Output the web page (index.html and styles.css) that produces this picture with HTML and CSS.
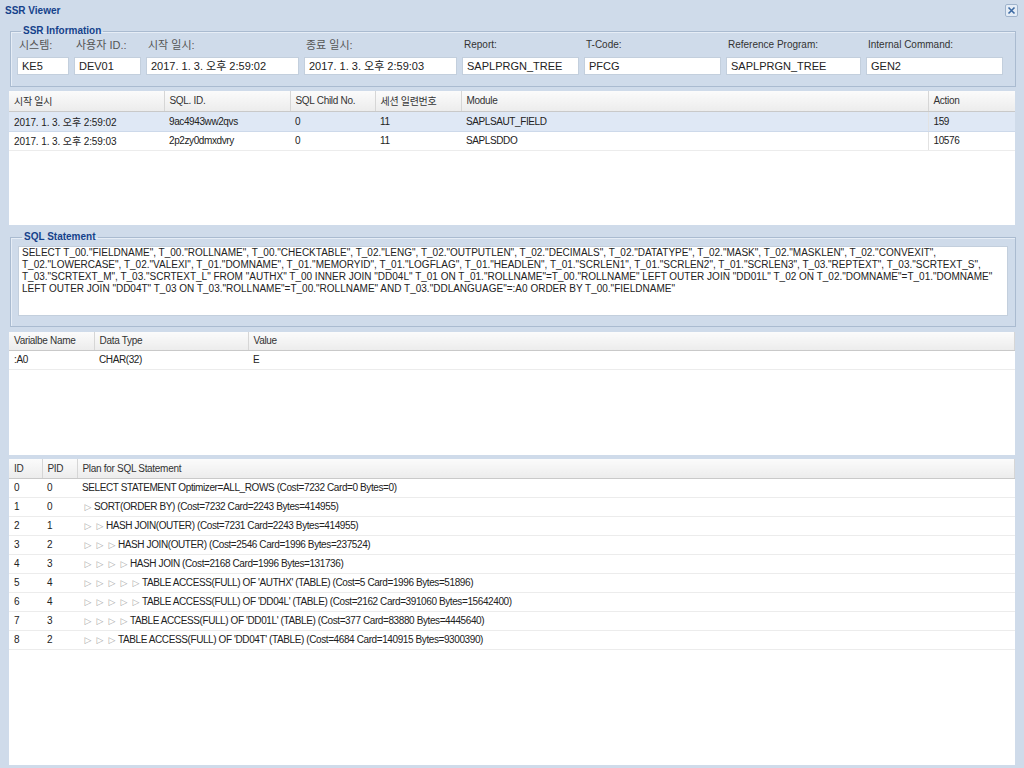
FILE: index.html
```html
<!DOCTYPE html>
<html lang="ko">
<head>
<meta charset="utf-8">
<title>SSR Viewer</title>
<link rel="stylesheet" href="styles.css">
</head>
<body>
<div class="titlebar">
  <span class="title">SSR Viewer</span>
  <span class="close"><svg width="13" height="13" viewBox="0 0 13 13"><rect x="0.5" y="0.5" width="12" height="12" rx="1.5" fill="#e4ecf6" stroke="#9fb3cc"/><path d="M3.5 3.5 L9.5 9.5 M9.5 3.5 L3.5 9.5" stroke="#3d6aa3" stroke-width="1.6"/></svg></span>
</div>

<fieldset class="group info">
  <legend>SSR Information</legend>
  <div class="fields">
    <div class="field"><label class="ko">시스템:</label><div class="input">KE5</div></div>
    <div class="field"><label class="ko">사용자 ID.:</label><div class="input">DEV01</div></div>
    <div class="field"><label class="ko">시작 일시:</label><div class="input">2017. 1. 3. 오후 2:59:02</div></div>
    <div class="field"><label class="ko">종료 일시:</label><div class="input">2017. 1. 3. 오후 2:59:03</div></div>
    <div class="field"><label>Report:</label><div class="input">SAPLPRGN_TREE</div></div>
    <div class="field"><label>T-Code:</label><div class="input">PFCG</div></div>
    <div class="field"><label>Reference Program:</label><div class="input">SAPLPRGN_TREE</div></div>
    <div class="field"><label>Internal Command:</label><div class="input">GEN2</div></div>
  </div>
</fieldset>

<div class="grid grid1">
  <table>
    <colgroup><col style="width:155px"><col style="width:126px"><col style="width:85px"><col style="width:86px"><col style="width:467px"><col style="width:87px"></colgroup>
    <thead><tr><th>시작 일시</th><th>SQL. ID.</th><th>SQL Child No.</th><th>세션 일련번호</th><th>Module</th><th>Action</th></tr></thead>
    <tbody>
      <tr class="sel"><td class="dt">2017. 1. 3. 오후 2:59:02</td><td>9ac4943ww2qvs</td><td>0</td><td>11</td><td>SAPLSAUT_FIELD</td><td class="lastcol">159</td></tr>
      <tr><td class="dt">2017. 1. 3. 오후 2:59:03</td><td>2p2zy0dmxdvry</td><td>0</td><td>11</td><td>SAPLSDDO</td><td class="lastcol">10576</td></tr>
    </tbody>
  </table>
</div>

<fieldset class="group sqlgroup">
  <legend>SQL Statement</legend>
  <div class="sqltext">SELECT T_00."FIELDNAME", T_00."ROLLNAME", T_00."CHECKTABLE", T_02."LENG", T_02."OUTPUTLEN", T_02."DECIMALS", T_02."DATATYPE", T_02."MASK", T_02."MASKLEN", T_02."CONVEXIT",<br>T_02."LOWERCASE", T_02."VALEXI", T_01."DOMNAME", T_01."MEMORYID", T_01."LOGFLAG", T_01."HEADLEN", T_01."SCRLEN1", T_01."SCRLEN2", T_01."SCRLEN3", T_03."REPTEXT", T_03."SCRTEXT_S",<br>T_03."SCRTEXT_M", T_03."SCRTEXT_L" FROM "AUTHX" T_00 INNER JOIN "DD04L" T_01 ON T_01."ROLLNAME"=T_00."ROLLNAME" LEFT OUTER JOIN "DD01L" T_02 ON T_02."DOMNAME"=T_01."DOMNAME"<br>LEFT OUTER JOIN "DD04T" T_03 ON T_03."ROLLNAME"=T_00."ROLLNAME" AND T_03."DDLANGUAGE"=:A0 ORDER BY T_00."FIELDNAME"</div>
</fieldset>

<div class="grid grid2">
  <table>
    <colgroup><col style="width:85px"><col style="width:154px"><col></colgroup>
    <thead><tr><th>Varialbe Name</th><th>Data Type</th><th>Value</th></tr></thead>
    <tbody>
      <tr><td>:A0</td><td>CHAR(32)</td><td>E</td></tr>
    </tbody>
  </table>
</div>

<div class="grid grid3">
  <table>
    <colgroup><col style="width:33px"><col style="width:35px"><col></colgroup>
    <thead><tr><th>ID</th><th>PID</th><th>Plan for SQL Statement</th></tr></thead>
    <tbody>
      <tr><td>0</td><td>0</td><td>SELECT STATEMENT Optimizer=ALL_ROWS (Cost=7232 Card=0 Bytes=0)</td></tr>
      <tr><td>1</td><td>0</td><td><span class="tri">▷</span>SORT(ORDER BY) (Cost=7232 Card=2243 Bytes=414955)</td></tr>
      <tr><td>2</td><td>1</td><td><span class="tri">▷</span><span class="tri">▷</span>HASH JOIN(OUTER) (Cost=7231 Card=2243 Bytes=414955)</td></tr>
      <tr><td>3</td><td>2</td><td><span class="tri">▷</span><span class="tri">▷</span><span class="tri">▷</span>HASH JOIN(OUTER) (Cost=2546 Card=1996 Bytes=237524)</td></tr>
      <tr><td>4</td><td>3</td><td><span class="tri">▷</span><span class="tri">▷</span><span class="tri">▷</span><span class="tri">▷</span>HASH JOIN (Cost=2168 Card=1996 Bytes=131736)</td></tr>
      <tr><td>5</td><td>4</td><td><span class="tri">▷</span><span class="tri">▷</span><span class="tri">▷</span><span class="tri">▷</span><span class="tri">▷</span>TABLE ACCESS(FULL) OF 'AUTHX' (TABLE) (Cost=5 Card=1996 Bytes=51896)</td></tr>
      <tr><td>6</td><td>4</td><td><span class="tri">▷</span><span class="tri">▷</span><span class="tri">▷</span><span class="tri">▷</span><span class="tri">▷</span>TABLE ACCESS(FULL) OF 'DD04L' (TABLE) (Cost=2162 Card=391060 Bytes=15642400)</td></tr>
      <tr><td>7</td><td>3</td><td><span class="tri">▷</span><span class="tri">▷</span><span class="tri">▷</span><span class="tri">▷</span>TABLE ACCESS(FULL) OF 'DD01L' (TABLE) (Cost=377 Card=83880 Bytes=4445640)</td></tr>
      <tr><td>8</td><td>2</td><td><span class="tri">▷</span><span class="tri">▷</span><span class="tri">▷</span>TABLE ACCESS(FULL) OF 'DD04T' (TABLE) (Cost=4684 Card=140915 Bytes=9300390)</td></tr>
    </tbody>
  </table>
</div>
</body>
</html>
```

FILE: styles.css
```css
* { box-sizing: border-box; }
html, body { margin: 0; padding: 0; }
body {
  width: 1024px;
  height: 768px;
  overflow: hidden;
  background: #cfdbea;
  font-family: "Liberation Sans", "Noto Sans CJK KR", sans-serif;
  font-size: 10px;
  color: #222;
  display: flex;
  flex-direction: column;
}
.titlebar {
  height: 24px;
  flex: none;
  display: flex;
  align-items: flex-start;
  justify-content: space-between;
  padding: 4px 6px 0 5px;
}
.title {
  font-weight: bold;
  font-size: 10px;
  color: #15428b;
  line-height: 13px;
}
.close { display: block; height: 13px; }
.close svg { display: block; }

.group {
  flex: none;
  margin: 0 8px 0 10px;
  border: 1px solid #aabbd0;
  box-shadow: inset 1px 1px 0 #e6edf6;
  padding: 0 6px 11px 6px;
  min-width: 0;
}
.group legend {
  font-weight: bold;
  font-size: 10px;
  line-height: 14px;
  color: #15428b;
  padding: 0 2px;
  margin-left: 4px;
}
.fields {
  display: grid;
  grid-template-columns: 52px 67px 153px 153px 117px 137px 135px 137px;
  column-gap: 5px;
}
.field label {
  display: block;
  height: 15px;
  line-height: 14px;
  padding-left: 2px;
  color: #333;
  font-size: 10px;
  white-space: nowrap;
}
.field label.ko { color: #555; font-size: 11px; }
.input {
  margin-top: 4px;
  height: 18px;
  background: #fff;
  border: 1px solid #c3cfdd;
  padding: 0 4px;
  line-height: 16px;
  font-size: 11px;
  color: #222;
  white-space: nowrap;
  overflow: hidden;
}

.grid {
  flex: none;
  margin-left: 9px;
  width: 1006px;
  background: #fff;
  overflow: hidden;
}
.grid1 { margin-top: 4px; height: 134px; }
.grid2 { margin-top: 5px; height: 123px; }
.grid3 { margin-top: 4px; height: 306px; }

table {
  border-collapse: collapse;
  table-layout: fixed;
  width: 100%;
}
th {
  height: 19px;
  padding: 0 5px;
  text-align: left;
  font-weight: normal;
  color: #333;
  letter-spacing: -0.3px;
  background: linear-gradient(#fbfbfb, #ececec);
  border-right: 1px solid #d6d6d6;
  border-bottom: 1px solid #c9c9c9;
  white-space: nowrap;
  overflow: hidden;
}
.grid1 th { height: 20px; }
.grid2 th { height: 18px; }
td {
  height: 19px;
  padding: 0 5px;
  border-bottom: 1px solid #ececec;
  white-space: nowrap;
  overflow: hidden;
  color: #222;
  letter-spacing: -0.4px;
}
.grid1 tbody tr:first-child td { height: 20px; }
td.dt { letter-spacing: -0.1px; }
td.lastcol { border-left: 1px solid #e2e2e2; }
tr.sel td { background: #dfe8f5; border-bottom-color: #cdd9ea; }

.sqlgroup { margin-top: 5px; padding: 2px 7px 10px 7px; }
.sqltext {
  height: 70px;
  background: #fff;
  border: 1px solid #c3cfdd;
  padding: 0 3px;
  line-height: 12px;
  font-size: 10px;
  color: #222;
  white-space: nowrap;
  overflow: hidden;
}
.tri {
  display: inline-block;
  width: 12px;
  text-align: center;
  letter-spacing: 0;
  color: #aaaaaa;
  font-family: "DejaVu Sans", sans-serif;
  font-size: 9px;
}
```
